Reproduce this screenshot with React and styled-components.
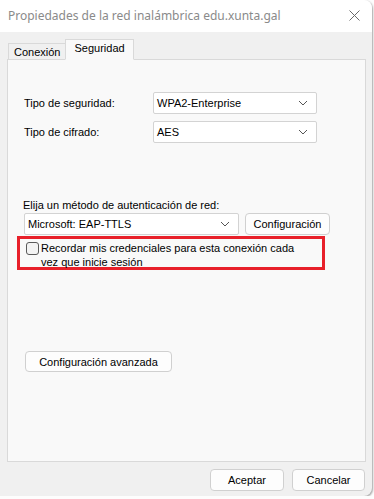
import React from "react";
import styled, { createGlobalStyle } from "styled-components";

const GlobalStyle = createGlobalStyle`
  html, body {
    margin: 0;
    padding: 0;
    background: #fdfdfd;
  }
  body {
    font-family: "Liberation Sans", Arial, sans-serif;
    font-size: 11px;
    color: #000;
  }
`;

const Window = styled.div`
  width: 372px;
  height: 496px;
  background: #f0f0f0;
  border-top-right-radius: 8px;
  border-bottom-right-radius: 8px;
  box-shadow: 1px 1px 2px rgba(0, 0, 0, 0.35);
  display: flex;
  flex-direction: column;
  overflow: hidden;
`;

const TitleBar = styled.div`
  height: 30px;
  background: #fff;
  display: flex;
  align-items: center;
  justify-content: space-between;
  padding: 0 10px 2px 8px;
  color: #8a8a8a;
  font-family: "Noto Sans", sans-serif;
  font-size: 12px;
`;

const CloseIcon = styled.svg`
  width: 11px;
  height: 11px;
  margin-right: 2px;
`;

const Body = styled.div`
  flex: 1;
  display: flex;
  flex-direction: column;
  padding: 7px 7px 0 7px;
`;

const Tabs = styled.div`
  display: flex;
  align-items: flex-end;
  height: 20px;
  padding-left: 1px;
`;

const Tab = styled.div`
  height: ${(p) => (p.$active ? "21px" : "16px")};
  padding: ${(p) => (p.$active ? "0 8px 4px" : "1px 5px 0")};
  display: flex;
  align-items: center;
  background: ${(p) => (p.$active ? "#f9f9f9" : "#f0f0f0")};
  border: 1px solid #d9d9d9;
  border-bottom: ${(p) => (p.$active ? "1px solid #f9f9f9" : "none")};
  border-right: ${(p) => (p.$active ? "1px solid #d9d9d9" : "none")};
  margin-bottom: ${(p) => (p.$active ? "-1px" : "0")};
  position: relative;
  z-index: ${(p) => (p.$active ? 1 : 0)};
  box-sizing: border-box;
`;

const Panel = styled.div`
  height: 403px;
  width: 359px;
  box-sizing: border-box;
  background: #f9f9f9;
  border: 1px solid #d9d9d9;
  display: flex;
  flex-direction: column;
  padding: 32px 0 0 16px;
`;

const FieldRow = styled.div`
  display: flex;
  align-items: center;
  height: 22px;
  margin-bottom: ${(p) => p.$gap || 0}px;
`;

const Label = styled.div`
  width: 129px;
`;

const Select = styled.div`
  width: ${(p) => p.$w}px;
  height: 22px;
  box-sizing: border-box;
  background: #fff;
  border: 1px solid #d3d3d3;
  border-radius: 2px;
  display: flex;
  align-items: center;
  justify-content: space-between;
  padding: 0 8px 0 3px;
`;

const Chevron = styled.svg`
  width: 10px;
  height: 6px;
`;

const MethodLabel = styled.div`
  margin-top: 56px;
  margin-left: -1px;
  height: 14px;
`;

const MethodRow = styled.div`
  display: flex;
  gap: 6px;
  margin-top: 0;
`;

const Button = styled.div`
  width: ${(p) => p.$w}px;
  height: ${(p) => p.$h || 22}px;
  box-sizing: border-box;
  background: #fdfdfd;
  border: 1px solid #d0d0d0;
  border-radius: 4px;
  display: flex;
  align-items: center;
  justify-content: center;
  white-space: nowrap;
`;

const Highlight = styled.div`
  width: 308px;
  height: 34px;
  box-sizing: border-box;
  border: 3px solid #e8202a;
  margin: 1px 0 0 -7px;
  padding: 3px 0 0 6px;
  display: flex;
  align-items: flex-start;
  gap: 2px;
`;

const Checkbox = styled.div`
  width: 13px;
  height: 13px;
  flex: none;
  box-sizing: border-box;
  border: 1px solid #5a5a5a;
  border-radius: 3px;
  background: #f3f3f3;
`;

const CheckText = styled.div`
  line-height: 14px;
  margin-top: -1px;
  white-space: nowrap;
`;

const Spacer = styled.div`
  flex: 1;
`;

const AdvancedWrap = styled.div`
  margin: 81px 0 0 1px;
`;

const Footer = styled.div`
  display: flex;
  justify-content: flex-end;
  gap: 8px;
  padding: 7px 0 0 0;
`;

const ChevronDown = () => (
  <Chevron viewBox="0 0 10 6">
    <path d="M1 1 L5 5 L9 1" stroke="#555" strokeWidth="1" fill="none" />
  </Chevron>
);

const App = () => {
  return (
    <>
      <GlobalStyle />
      <Window>
        <TitleBar>
          <span>Propiedades de la red inalámbrica edu.xunta.gal</span>
          <CloseIcon viewBox="0 0 11 11">
            <path d="M0.5 0.5 L10.5 10.5 M10.5 0.5 L0.5 10.5" stroke="#6a6a6a" strokeWidth="1" fill="none" />
          </CloseIcon>
        </TitleBar>
        <Body>
          <Tabs>
            <Tab>Conexión</Tab>
            <Tab $active>Seguridad</Tab>
          </Tabs>
          <Panel>
            <FieldRow $gap={7}>
              <Label>Tipo de seguridad:</Label>
              <Select $w={164}>
                WPA2-Enterprise
                <ChevronDown />
              </Select>
            </FieldRow>
            <FieldRow>
              <Label>Tipo de cifrado:</Label>
              <Select $w={164}>
                AES
                <ChevronDown />
              </Select>
            </FieldRow>
            <MethodLabel>Elija un método de autenticación de red:</MethodLabel>
            <MethodRow>
              <Select $w={215}>
                Microsoft: EAP-TTLS
                <ChevronDown />
              </Select>
              <Button $w={85}>Configuración</Button>
            </MethodRow>
            <Highlight>
              <Checkbox />
              <CheckText>
                Recordar mis credenciales para esta conexión cada
                <br />
                vez que inicie sesión
              </CheckText>
            </Highlight>
            <AdvancedWrap>
              <Button $w={147} $h={21}>Configuración avanzada</Button>
            </AdvancedWrap>
            <Spacer />
          </Panel>
          <Footer>
            <Button $w={74}>Aceptar</Button>
            <Button $w={73}>Cancelar</Button>
          </Footer>
        </Body>
      </Window>
    </>
  );
};

export default App;
